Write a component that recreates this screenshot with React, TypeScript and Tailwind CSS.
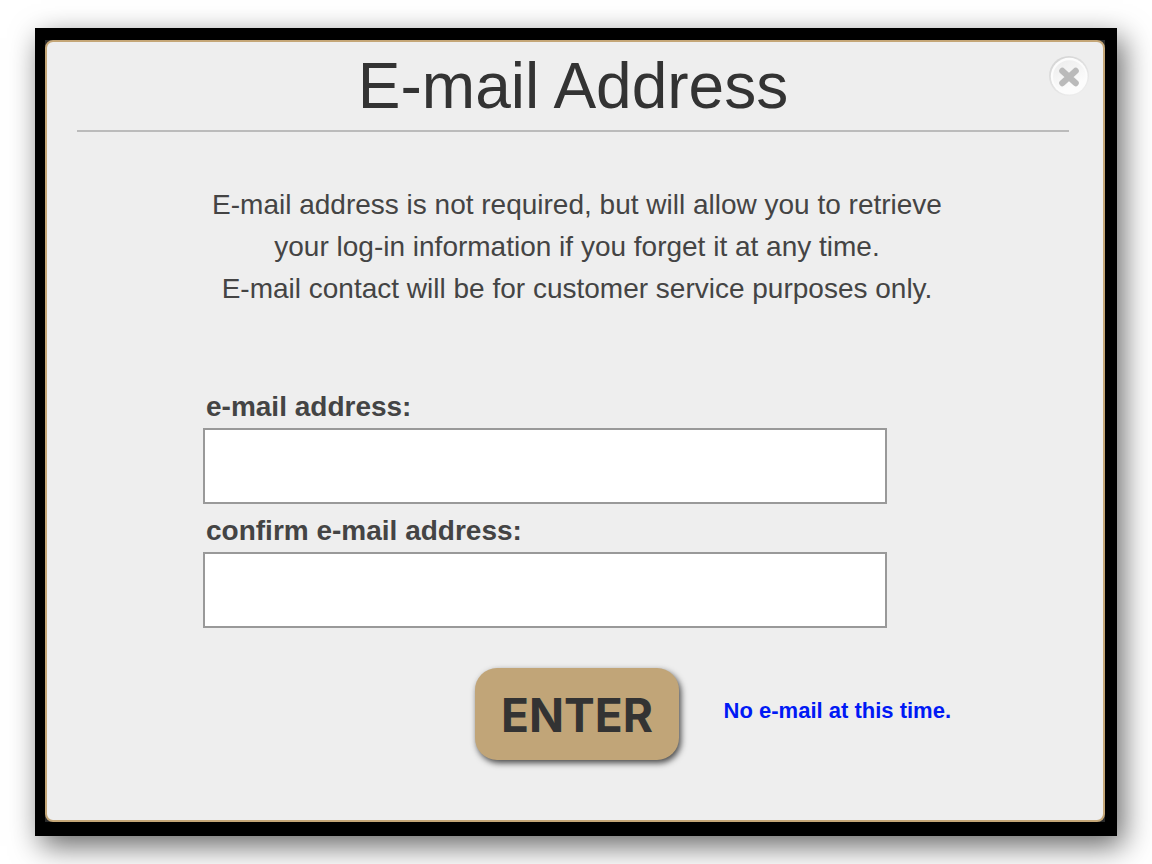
import React from 'react';

const FIELDS = [
  { id: 'email', label: 'e-mail address:' },
  { id: 'email-confirm', label: 'confirm e-mail address:' },
];

const CloseIcon: React.FC = () => (
  <svg viewBox="0 0 40 40" fill="none" className="size-10" aria-hidden="true">
    <defs>
      <linearGradient id="close-rim" x1="0" y1="0" x2="0.6" y2="1">
        <stop offset="0" stopColor="#d2d2d2" />
        <stop offset="1" stopColor="#ececec" />
      </linearGradient>
      <linearGradient id="close-face" x1="0.2" y1="0" x2="0.6" y2="0.8">
        <stop offset="0" stopColor="#ededed" />
        <stop offset="1" stopColor="#fcfcfc" />
      </linearGradient>
    </defs>
    <circle cx="20" cy="20" r="20" fill="url(#close-rim)" />
    <circle cx="20.2" cy="20.2" r="18.4" fill="#fcfcfc" />
    <circle cx="20.4" cy="20.6" r="16.4" fill="url(#close-face)" />
    <path
      d="M13.4 15 L26.6 27 M26.6 15 L13.4 27"
      stroke="#bababa"
      strokeWidth="6.4"
      strokeLinecap="round"
    />
  </svg>
);

export default function App() {
  return (
    <main className="min-h-screen bg-white px-[35px] pt-7 pb-7 font-['Liberation_Sans',Arial,sans-serif] text-[#444]">
      <div className="bg-black pt-3 pr-3 pb-3.5 pl-2.5 shadow-[6px_10px_28px_rgba(0,0,0,0.6)]">
        <div className="bg-[#2a2a2a]">
          <section className="relative rounded-lg border-2 border-[#c4a677] bg-[#eee] pt-2 pr-[34px] pb-[60px] pl-[30px]">
            <button type="button" aria-label="Close" className="absolute top-3.5 right-3.5 cursor-pointer">
              <CloseIcon />
            </button>

            <h1 className="border-b-2 border-[#bbb] pb-2 text-center text-[64px] leading-[72px] text-[#333]">
              E-mail Address
            </h1>

            <div className="pt-[52px] pl-2">
              <p className="text-center text-[28px] leading-[42px]">
                E-mail address is not required, but will allow you to retrieve
                <br />
                your log-in information if you forget it at any time.
                <br />
                E-mail contact will be for customer service purposes only.
              </p>

              <form className="mx-auto mt-20 max-w-[748px]" onSubmit={e => e.preventDefault()}>
                <div className="space-y-2.5 pr-16">
                  {FIELDS.map(f => (
                    <div key={f.id}>
                      <label htmlFor={f.id} className="block pb-1 pl-[3px] text-[28px] leading-[34px] font-bold">
                        {f.label}
                      </label>
                      <input
                        id={f.id}
                        type="email"
                        className="block h-[76px] w-full border-2 border-[#999] bg-white px-4 text-[28px] outline-none"
                      />
                    </div>
                  ))}
                </div>

                <div className="mt-10 grid grid-cols-[1fr_auto_1fr] items-center">
                  <button
                    type="submit"
                    className="col-start-2 h-[92px] w-[204px] cursor-pointer rounded-[22px] bg-[#c1a578] pt-0.5 font-[Inter,sans-serif] text-[46px] leading-none font-bold text-[#333] shadow-[2px_3px_6px_rgba(0,0,0,0.7)]"
                  >
                    ENTER
                  </button>
                  <a href="#" className="justify-self-end pb-1.5 text-[22px] leading-6 font-bold whitespace-nowrap text-[#0019f5]">
                    No e-mail at this time.
                  </a>
                </div>
              </form>
            </div>
          </section>
        </div>
      </div>
    </main>
  );
}
